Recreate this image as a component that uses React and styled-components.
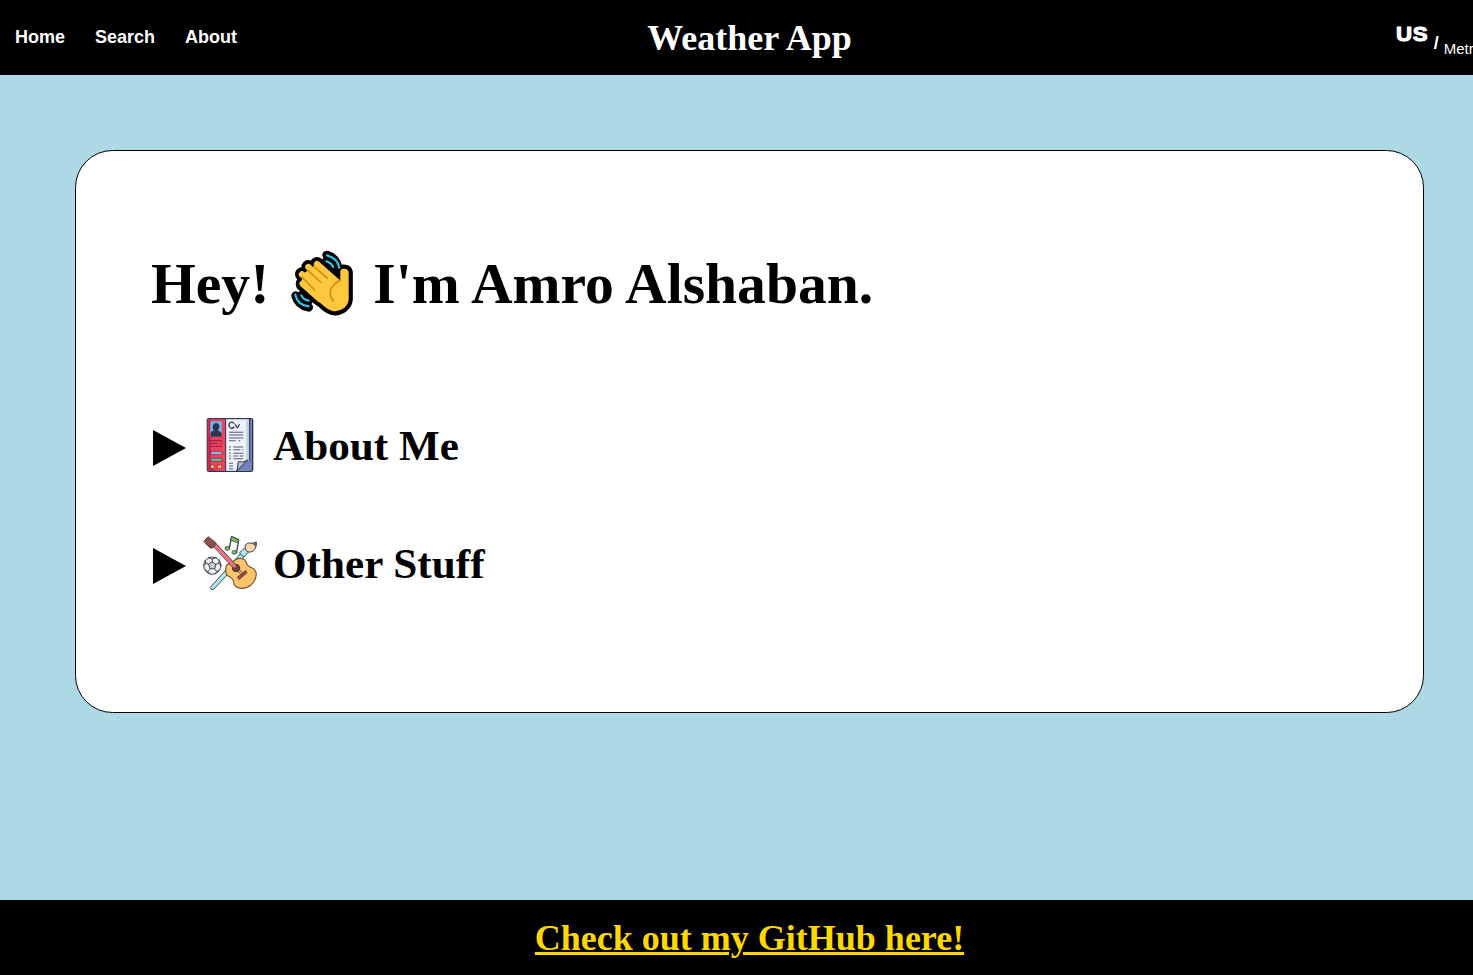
import React from "react";
import styled, { createGlobalStyle } from "styled-components";

const GlobalStyle = createGlobalStyle`
  * { box-sizing: border-box; }
  html { overflow: hidden; background: #add8e6; }
  body { margin: 0; overflow: hidden; font-family: "Liberation Serif", "Times New Roman", serif; }
`;

const Page = styled.div`
  width: 1499px;
  height: 975px;
  display: flex;
  flex-direction: column;
  background: #add8e6;
`;

const Header = styled.header`
  height: 75px;
  flex: none;
  display: grid;
  grid-template-columns: 1fr auto 1fr;
  background: #000;
  color: #fff;
`;

const Nav = styled.nav`
  display: flex;
  gap: 30px;
  padding: 27px 0 0 15px;
`;

const NavLink = styled.a`
  font: bold 18px/21px "Liberation Sans", Arial, sans-serif;
  color: #fff;
`;

const Title = styled.h1`
  margin: 0;
  padding-top: 18px;
  font-size: 36px;
  line-height: 41px;
`;

const Units = styled.div`
  display: flex;
  align-items: flex-start;
  padding-left: 544px;
  width: 0;
  font-family: "Liberation Sans", Arial, sans-serif;
  white-space: nowrap;

  > * { flex: none; }
`;

const UnitActive = styled.span`
  margin-top: 22px;
  width: 38px;
  font-size: 21px;
  line-height: 24px;
  font-weight: bold;
  letter-spacing: 0.6px;
  -webkit-text-stroke: 1.1px #fff;
  transform: scaleX(1.06);
  transform-origin: left;
`;

const Slash = styled.span`
  margin-top: 33px;
  width: 10px;
  font-size: 18px;
  line-height: 21px;
  font-weight: bold;
`;

const UnitOther = styled.span`
  margin-top: 40px;
  font-size: 15px;
  line-height: 17px;
`;

const Main = styled.main`
  flex: 1;
  padding: 75px;
`;

const Card = styled.section`
  height: 563px;
  padding: 98px 75px 0;
  background: #fff;
  border: 1px solid #000;
  border-radius: 37.5px;
`;

const Greeting = styled.h2`
  margin: 0;
  height: 70px;
  display: flex;
  align-items: flex-start;
  font-size: 57.6px;
  line-height: 70px;
  white-space: pre;

  svg { margin: 1px 20px 0 22px; }
`;

const Sections = styled.div`
  display: flex;
  flex-direction: column;
  gap: 64px;
  padding: 99px 0 0 1px;
`;

const Summary = styled.h3`
  margin: 0;
  height: 54px;
  display: flex;
  align-items: flex-start;
  font-size: 43.2px;
  line-height: 56px;
`;

const Marker = styled.svg`
  margin: 12px 17px 0 1px;
`;

const IconSvg = styled.svg`
  margin-right: 16px;
`;

const Footer = styled.footer`
  height: 75px;
  flex: none;
  display: flex;
  justify-content: center;
  padding-top: 18px;
  background: #000;
`;

const FooterLink = styled.a`
  font-size: 36px;
  line-height: 41px;
  font-weight: bold;
  color: #ffd700;
  text-decoration: underline;
  text-decoration-thickness: 3px;
  text-underline-offset: 2px;
`;

const palm =
  "M150 107L157 101V72Q159 64 168 65Q180 65 182 75V157Q181 172 169 182Q150 197 131 191Q120 187 110 179L38 117L46 80L90 48Z";
const fingers = "M87 51L152 109M61 60L115 112M42 82L100 136M44 110L95 156";

const Wave = () => (
  <svg width="62" height="66" viewBox="9 9 186 198" fill="none" strokeLinecap="round" strokeLinejoin="round">
    <g stroke="#000" strokeWidth="26">
      <path d="M116 24Q146 33 150 64M115 42L136 60" />
      <path d="M23 146Q30 174 62 181M40 145L62 161" />
    </g>
    <path d={palm} fill="#000" stroke="#000" strokeWidth="25" />
    <path d={fingers} stroke="#000" strokeWidth="42" />
    <path d={palm} fill="#ffc83d" />
    <path d={fingers} stroke="#ffc83d" strokeWidth="19" />
    <path
      d="M81 61L118 94M60 71L98 105M43 91L80 129M158 99Q134 112 128 128Q123 148 136 162"
      stroke="#d38c15" strokeWidth="5"
    />
    <g stroke="#35c1f1" strokeWidth="6.5">
      <path d="M117 25Q148 33 154 62M115 43Q130 48 136 60" />
      <path d="M22 143Q29 174 62 178M40 145Q46 158 62 161" />
    </g>
  </svg>
);

const Resume = () => (
  <IconSvg width="54" height="54" viewBox="174 24 162 162" strokeLinejoin="round" strokeLinecap="round">
    <rect x="187" y="26" width="136" height="158" rx="5" fill="#7183ba" stroke="#31334d" strokeWidth="4" />
    <path d="M190 28H242V182H190Q188 182 188 178V32Z" fill="#ef405d" />
    <path d="M190 28H197V170L214 182H190Z" fill="#b9245a" />
    <path d="M242 28H307V151L276 182H242Z" fill="#edf1fb" />
    <path d="M304 28H313V182H276L304 153Z" fill="#c4cce5" />
    <path d="M242 27V183M314 27V183" stroke="#31334d" strokeWidth="3" />
    <rect x="196" y="34" width="34" height="46" fill="#69b9e8" />
    <path d="M197 80V69Q198 63 206 62Q201 55 204 46Q207 39 213 39Q224 41 223 51Q222 58 218 62Q230 64 230 72V80Z" fill="#31334d" />
    <path d="M196 92H231M196 100H219M196 109H231M226 100H231" stroke="#862544" strokeWidth="3" />
    <rect x="198" y="125" width="33" height="8" fill="#7bd6ee" stroke="#862544" strokeWidth="2" />
    <rect x="198" y="145" width="33" height="9" fill="#4eca8b" stroke="#862544" strokeWidth="2" />
    <rect x="197" y="165" width="11" height="10" fill="#ffc65b" stroke="#862544" strokeWidth="2" />
    <rect x="218" y="165" width="12" height="10" fill="#ffc65b" stroke="#862544" strokeWidth="2" />
    <path d="M267 40Q261 34 255 38Q249 45 255 53Q261 58 267 51M271 44L277 54L283 44" fill="none" stroke="#31334d" strokeWidth="3.5" />
    <path d="M252 67H295M252 75H295M252 84H295M252 92H272M280 92H286M252 111H258M265 111H295M252 119H258M265 119H286M291 119H295M252 130H258M265 130H295M252 138H258M265 138H279M284 138H295M252 146H258M265 146H295M252 160H264M252 168H264M252 176H264" stroke="#5a5d72" strokeWidth="3.2" strokeLinecap="butt" />
    <path d="M276 182L280 155Q293 160 307 151Z" fill="#b4bedf" stroke="#31334d" strokeWidth="3" />
    <path d="M276 182L307 151L320 155V182Z" fill="#7183ba" />
    <path d="M276 182L307 151" stroke="#31334d" strokeWidth="3" />
  </IconSvg>
);

const Hobbies = () => (
  <IconSvg width="54" height="54" viewBox="174 18 162 162" fill="none" strokeLinejoin="round" strokeLinecap="round">
    <path d="M197 171L291 66L301 76L206 178Q197 181 196 174Z" fill="#aee9f5" stroke="#40464e" strokeWidth="3" />
    <path d="M284 68L298 55L310 67L297 80Z" fill="#aee9f5" stroke="#40464e" strokeWidth="3" />
    <path d="M301 58Q297 41 311 39Q325 42 334 36Q336 47 330 57Q323 68 309 66Z" fill="#f7d5ad" stroke="#40464e" strokeWidth="3" />
    <path d="M322 40L334 36Q335 44 331 50Z" fill="#795c52" />
    <circle cx="202" cy="107" r="26" fill="#f1f3f5" stroke="#444950" strokeWidth="3" />
    <path d="M202 96L213 103L209 116H195L191 103Z" fill="#c8cdd1" stroke="#444950" strokeWidth="3" />
    <path d="M202 96V87L190 83M202 87L214 83M213 103L222 99L224 89M222 99L227 108M209 116L215 125L224 121M215 125L209 132M195 116L189 125L181 120M189 125L195 132M191 103L182 99L180 91M182 99L177 108" stroke="#444950" strokeWidth="3" />
    <path d="M244 106Q250 100 262 97Q271 88 278 86Q290 83 298 89Q305 95 306 104Q311 110 320 113Q333 119 334 132Q333 152 318 165Q303 177 286 175Q267 172 266 156Q265 147 256 142Q242 137 242 122Z" fill="#ffc46b" stroke="#765334" strokeWidth="3.5" />
    <circle cx="273" cy="114" r="11" fill="#6c3e3e" stroke="#4e3434" strokeWidth="3" />
    <path d="M203 45L211 38L277 109L269 117Z" fill="#f46e80" stroke="#514047" strokeWidth="3" />
    <path d="M177 33L189 20L198 27L210 36V46L203 54H196L188 47Z" fill="#8b5149" stroke="#514047" strokeWidth="3" />
    <path d="M272 108L293 129M268 114L287 132" stroke="#65424a" strokeWidth="3" />
    <path d="M278 141L302 122L306 128L283 148Z" fill="#a34b45" stroke="#603b3b" strokeWidth="3" />
    <path d="M253 54L260 20L281 29L275 67" stroke="#40464e" strokeWidth="4" />
    <path d="M260 20L281 29L279 39L258 31Z" fill="#70c653" stroke="#40464e" strokeWidth="2.5" />
    <ellipse cx="247" cy="55" rx="7" ry="6" fill="#70c653" stroke="#40464e" strokeWidth="2.5" />
    <ellipse cx="268" cy="67" rx="7" ry="6" fill="#70c653" stroke="#40464e" strokeWidth="2.5" />
  </IconSvg>
);

const Disclosure = ({ icon, children }) => (
  <Summary>
    <Marker width="33" height="36" viewBox="0 0 33 36"><path d="M0 0L33 18L0 36Z" /></Marker>
    {icon}
    <span>{children}</span>
  </Summary>
);

export default function App() {
  return (
    <>
      <GlobalStyle />
      <Page>
        <Header>
          <Nav>
            <NavLink>Home</NavLink>
            <NavLink>Search</NavLink>
            <NavLink>About</NavLink>
          </Nav>
          <Title>Weather App</Title>
          <Units>
            <UnitActive>US</UnitActive>
            <Slash>/</Slash>
            <UnitOther>Metric</UnitOther>
          </Units>
        </Header>
        <Main>
          <Card>
            <Greeting>
              <span>Hey!</span>
              <Wave />
              <span>I'm Amro Alshaban.</span>
            </Greeting>
            <Sections>
              <Disclosure icon={<Resume />}>About Me</Disclosure>
              <Disclosure icon={<Hobbies />}>Other Stuff</Disclosure>
            </Sections>
          </Card>
        </Main>
        <Footer>
          <FooterLink>Check out my GitHub here!</FooterLink>
        </Footer>
      </Page>
    </>
  );
}
